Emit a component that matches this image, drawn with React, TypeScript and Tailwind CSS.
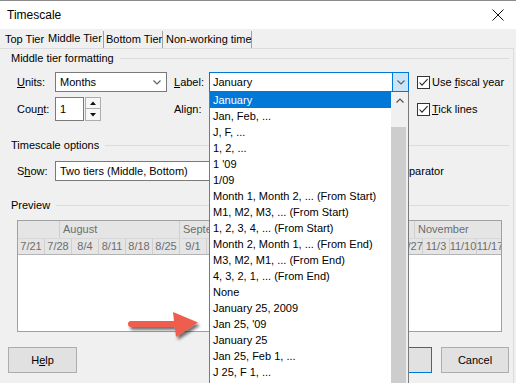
import React from "react";

const labelOptions = [
  "January",
  "Jan, Feb, ...",
  "J, F, ...",
  "1, 2, ...",
  "1 '09",
  "1/09",
  "Month 1, Month 2, ... (From Start)",
  "M1, M2, M3, ... (From Start)",
  "1, 2, 3, 4, ... (From Start)",
  "Month 2, Month 1, ... (From End)",
  "M3, M2, M1, ... (From End)",
  "4, 3, 2, 1, ... (From End)",
  "None",
  "January 25, 2009",
  "Jan 25, '09",
  "January 25",
  "Jan 25, Feb 1, ...",
  "J 25, F 1, ...",
];

// weeks hidden under the open list are left blank
const weeks = [
  "7/21", "7/28", "8/4", "8/11", "8/18", "8/25", "9/1", "", "",
  "", "", "", "", "", "10/27", "11/3", "11/10", "11/17",
];

const Chevron = ({ up = false, color = "#606060" }: { up?: boolean; color?: string }) => (
  <svg width="8" height="5" viewBox="0 0 8 5">
    <path
      d={up ? "M0.5 4.5 L4 1 L7.5 4.5" : "M0.5 0.5 L4 4 L7.5 0.5"}
      fill="none"
      stroke={color}
      strokeWidth="1.2"
    />
  </svg>
);

const CheckBox = () => (
  <span className="flex h-[13px] w-[13px] shrink-0 items-center justify-center border border-[#333333] bg-white">
    <svg width="11" height="11" viewBox="0 0 11 11">
      <path d="M1.5 5.5 L4 8.2 L9.6 2.2" fill="none" stroke="#222222" strokeWidth="1.1" />
    </svg>
  </span>
);

const GroupHeader = ({ title }: { title: string }) => (
  <div className="flex h-[18px] items-center pl-[11px]">
    <span>{title}</span>
    <div className="ml-[6px] mr-[4px] h-px flex-1 bg-[#dcdcdc]" />
  </div>
);

export default function App() {
  return (
    <div className="relative h-[383px] w-[516px] overflow-hidden bg-[#f0f0f0] font-['Liberation_Sans',Arial,sans-serif] text-[11px] text-black">
      {/* Title bar */}
      <div className="flex h-[29px] items-center justify-between border-t border-[#8a8a8a] bg-white pl-[7px] pr-[12px]">
        <span className="text-[12px]">Timescale</span>
        <svg width="12" height="12" viewBox="0 0 12 12">
          <path d="M0.5 0.5 L11.5 11.5 M11.5 0.5 L0.5 11.5" stroke="#111111" strokeWidth="1" />
        </svg>
      </div>

      {/* Tabs */}
      <div className="flex h-[19px] items-end whitespace-nowrap pl-[2px]">
        <div className="flex h-[17px] w-[43px] items-center pl-[3px]">Top Tier</div>
        <div className="flex h-[17px] w-[59px] items-center border-r border-[#a0a0a0] pb-[2px] pl-[3px]">
          Middle Tier
        </div>
        <div className="flex h-[17px] w-[59px] items-center border-r border-[#a0a0a0] pl-[2px]">
          Bottom Tier
        </div>
        <div className="flex h-[17px] w-[89px] items-center border-r border-[#a0a0a0] pl-[3px]">
          Non-working time
        </div>
      </div>

      {/* Tab page */}
      <div className="mr-[2px] h-[340px] border-r border-t border-[#dcdcdc]">
        <GroupHeader title="Middle tier formatting" />

        {/* Units / Label */}
        <div className="mt-[5px] flex h-[20px] items-center pl-[17px]">
          <span className="w-[38px]">
            <u>U</u>nits:
          </span>
          <div className="flex h-[20px] w-[112px] items-center justify-between border border-[#7a7a7a] bg-white pl-[4px] pr-[5px]">
            <span>Months</span>
            <Chevron />
          </div>
          <span className="ml-[7px] w-[35px]">
            <u>L</u>abel:
          </span>
          <div className="flex h-[20px] w-[200px] items-center border border-[#0078d7] bg-white">
            <span className="flex-1 pl-[3px]">January</span>
            <div className="flex h-full w-[16px] items-center justify-center border-l border-[#0078d7] bg-[#cce4f7]">
              <Chevron />
            </div>
          </div>
          <div className="ml-[8px] flex items-center gap-[2px]">
            <CheckBox />
            <span>
              Use <u>f</u>iscal year
            </span>
          </div>
        </div>

        {/* Count / Align */}
        <div className="mt-[5px] flex h-[24px] items-center pl-[17px]">
          <span className="w-[38px]">
            Cou<u>n</u>t:
          </span>
          <div className="flex h-[24px] w-[29px] items-start border border-[#7a7a7a] bg-white pl-[4px] pt-[3px]">
            1
          </div>
          <div className="ml-[1px] flex h-[24px] w-[16px] flex-col">
            <div className="flex h-[12px] items-center justify-center border border-[#adadad] bg-[#f7f7f7]">
              <svg width="6" height="4" viewBox="0 0 6 4">
                <path d="M0 4 L3 0.5 L6 4 Z" fill="#111111" />
              </svg>
            </div>
            <div className="flex h-[12px] items-center justify-center border border-t-0 border-[#adadad] bg-[#f7f7f7]">
              <svg width="6" height="4" viewBox="0 0 6 4">
                <path d="M0 0 L3 3.5 L6 0 Z" fill="#111111" />
              </svg>
            </div>
          </div>
          <div className="w-[73px]" />
          <span className="w-[35px]">Align:</span>
          <div className="h-[20px] w-[200px] border border-[#7a7a7a] bg-white" />
          <div className="ml-[8px] flex items-center gap-[2px]">
            <CheckBox />
            <span>
              <u>T</u>ick lines
            </span>
          </div>
        </div>

        <div className="mt-[15px]">
          <GroupHeader title="Timescale options" />
        </div>

        {/* Show */}
        <div className="mt-[7px] flex h-[20px] items-center pl-[17px]">
          <span className="w-[38px]">
            S<u>h</u>ow:
          </span>
          <div className="flex h-[20px] w-[186px] items-center border border-[#7a7a7a] bg-white pl-[4px]">
            Two tiers (Middle, Bottom)
          </div>
          <div className="w-[168px]" />
          <span>parator</span>
        </div>

        <div className="mt-[15px]">
          <GroupHeader title="Preview" />
        </div>

        {/* Preview box */}
        <div className="ml-[17px] mt-[6px] h-[112px] w-[485px] overflow-hidden border border-[#a0a0a0] bg-white text-[#6d6d6d]">
          <div className="flex h-[17px] items-center whitespace-nowrap bg-[#e5e5e5]">
            <div className="h-full w-[42px] shrink-0 border-r border-[#cfcfcf]" />
            <div className="flex h-full w-[120px] shrink-0 items-center border-r border-[#cfcfcf] pl-[3px]">August</div>
            <div className="flex h-full w-[116px] shrink-0 items-center overflow-hidden border-r border-[#cfcfcf] pl-[3px]">
              September
            </div>
            <div className="h-full w-[119px] shrink-0 border-r border-[#cfcfcf]" />
            <div className="flex h-full w-[100px] shrink-0 items-center pl-[3px]">November</div>
          </div>
          <div className="flex h-[17px] whitespace-nowrap border-b border-t border-b-[#b4b4b4] border-t-[#d8d8d8] bg-[#e5e5e5]">
            {weeks.map((w, i) => (
              <div
                key={i}
                className="flex h-full w-[27px] shrink-0 items-center justify-center border-r border-[#cfcfcf]"
              >
                {w}
              </div>
            ))}
          </div>
        </div>

        {/* Buttons */}
        <div className="mt-[15px] flex h-[26px] items-center pl-[8px] pr-[4px]">
          <button className="flex h-[26px] w-[69px] items-center justify-center border border-[#adadad] bg-[#e1e1e1]">
            H<u>e</u>lp
          </button>
          <div className="flex-1" />
          <button className="flex h-[26px] w-[69px] items-center justify-center border border-[#0078d7] bg-[#e1e1e1]" />
          <button className="ml-[9px] flex h-[26px] w-[68px] items-center justify-center border border-[#adadad] bg-[#e1e1e1]">
            Cancel
          </button>
        </div>
      </div>

      {/* Open Label dropdown list */}
      <div className="absolute left-[209px] top-[92px] flex h-[300px] w-[200px] border-x border-[#7a7a7a] bg-white">
        <div className="w-[181px] whitespace-nowrap">
          {labelOptions.map((o, i) => (
            <div
              key={o}
              className={`h-[16px] pl-[3px] leading-[16px] ${i === 0 ? "bg-[#0078d7] text-white" : ""}`}
            >
              {o}
            </div>
          ))}
        </div>
        <div className="flex w-[17px] flex-col bg-[#f0f0f0]">
          <div className="flex h-[17px] items-center justify-center">
            <Chevron up color="#505050" />
          </div>
          <div className="h-[18px]" />
          <div className="mr-[2px] flex-1 bg-[#cdcdcd]" />
        </div>
      </div>

      {/* Callout arrow */}
      <svg className="absolute left-[120px] top-[302px]" width="90" height="45" viewBox="0 0 90 45">
        <defs>
          <filter id="sh" x="-20%" y="-30%" width="150%" height="180%">
            <feDropShadow dx="2" dy="3" stdDeviation="1.5" floodColor="#000000" floodOpacity="0.55" />
          </filter>
        </defs>
        <g filter="url(#sh)" fill="#ee5d4d">
          <path d="M11 22 L56 22" stroke="#ee5d4d" strokeWidth="6" strokeLinecap="round" />
          <path d="M53 10 L78 20.5 L56 35 Z" />
        </g>
      </svg>
    </div>
  );
}
